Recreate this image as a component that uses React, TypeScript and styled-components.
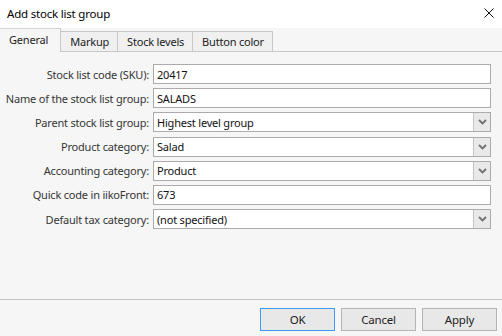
import { Fragment } from 'react';
import styled, { createGlobalStyle, css } from 'styled-components';

const GlobalStyle = createGlobalStyle`
  html, body {
    margin: 0;
    padding: 0;
    background: #f6f6f6;
  }
  * {
    box-sizing: border-box;
  }
`;

type Field = {
  label: string;
  value: string;
  dropdown?: boolean;
};

const fields: Field[] = [
  { label: 'Stock list code (SKU):', value: '20417' },
  { label: 'Name of the stock list group:', value: 'SALADS' },
  { label: 'Parent stock list group:', value: 'Highest level group', dropdown: true },
  { label: 'Product category:', value: 'Salad', dropdown: true },
  { label: 'Accounting category:', value: 'Product', dropdown: true },
  { label: 'Quick code in iikoFront:', value: '673' },
  { label: 'Default tax category:', value: '(not specified)', dropdown: true },
];

const tabs = ['General', 'Markup', 'Stock levels', 'Button color'];

const Window = styled.div`
  width: 502px;
  height: 336px;
  display: flex;
  flex-direction: column;
  background: #f6f6f6;
  font-family: 'Noto Sans', 'Open Sans', sans-serif;
  font-size: 11px;
  letter-spacing: -0.2px;
  color: #222;
  overflow: hidden;
`;

const TitleBar = styled.div`
  height: 28px;
  flex: none;
  background: #ffffff;
  display: flex;
  align-items: center;
  justify-content: space-between;
  padding: 0 8px 2px 7px;
`;

const Title = styled.span`
  font-size: 11.5px;
  color: #000;
`;

const CloseButton = styled.div`
  width: 10px;
  height: 10px;
  display: flex;
`;

const TabStrip = styled.div`
  height: 24px;
  flex: none;
  display: flex;
  align-items: flex-end;
  border-bottom: 1px solid #c8c8c8;
`;

const Tab = styled.div<{ $active?: boolean }>`
  height: 20px;
  padding: 0 8px 0 9px;
  display: flex;
  align-items: center;
  border: 1px solid #c8c8c8;
  border-bottom: none;
  border-left: none;
  background: #f0f0f0;
  color: #222;
  ${(p) =>
    p.$active &&
    css`
      height: 24px;
      margin-bottom: -1px;
      background: #f6f6f6;
      padding: 0 12px 3px 9px;
      border-top-color: #d4d4d4;
    `}
`;

const Form = styled.div`
  display: grid;
  grid-template-columns: 149px 338px;
  grid-auto-rows: 20px;
  row-gap: 4.2px;
  column-gap: 4px;
  padding: 12px 0 0 0;
  align-items: center;
`;

const Label = styled.label`
  text-align: right;
  white-space: nowrap;
  color: #353535;
`;

const Input = styled.div`
  height: 20px;
  display: flex;
  align-items: stretch;
  background: #ffffff;
  border: 1px solid #ababab;
`;

const Value = styled.span`
  flex: 1;
  display: flex;
  align-items: center;
  padding-left: 3px;
  color: #111;
  white-space: nowrap;
  overflow: hidden;
`;

const DropButton = styled.div`
  width: 17px;
  flex: none;
  display: flex;
  align-items: center;
  justify-content: center;
  background: #e9e9e9;
  border-left: 1px solid #c4c4c4;
`;

const Spacer = styled.div`
  flex: 1;
`;

const Footer = styled.div`
  height: 37px;
  flex: none;
  border-top: 1px solid #c4c4c4;
  display: flex;
  justify-content: flex-end;
  gap: 6px;
  padding: 8px 5px 0 0;
`;

const Button = styled.div<{ $primary?: boolean }>`
  width: 75px;
  height: 23px;
  display: flex;
  align-items: center;
  justify-content: center;
  background: #e8e8e8;
  border: 1px solid ${(p) => (p.$primary ? '#3c9bff' : '#b4b4b4')};
  color: #222;
  font-size: 11.5px;
`;

function Chevron() {
  return (
    <svg width="9" height="6" viewBox="0 0 9 6">
      <path d="M1 1 L4.5 4.5 L8 1" fill="none" stroke="#707070" strokeWidth="1.8" />
    </svg>
  );
}

export default function App() {
  return (
    <>
      <GlobalStyle />
      <Window>
        <TitleBar>
          <Title>Add stock list group</Title>
          <CloseButton>
            <svg width="10" height="10" viewBox="0 0 10 10">
              <path d="M0.5 0.5 L9.5 9.5 M9.5 0.5 L0.5 9.5" stroke="#111" strokeWidth="1" />
            </svg>
          </CloseButton>
        </TitleBar>
        <TabStrip>
          {tabs.map((t, i) => (
            <Tab key={t} $active={i === 0}>
              {t}
            </Tab>
          ))}
        </TabStrip>
        <Form>
          {fields.map((f) => (
            <Fragment key={f.label}>
              <Label>{f.label}</Label>
              <Input>
                <Value>{f.value}</Value>
                {f.dropdown && (
                  <DropButton>
                    <Chevron />
                  </DropButton>
                )}
              </Input>
            </Fragment>
          ))}
        </Form>
        <Spacer />
        <Footer>
          <Button $primary>OK</Button>
          <Button>Cancel</Button>
          <Button>Apply</Button>
        </Footer>
      </Window>
    </>
  );
}
